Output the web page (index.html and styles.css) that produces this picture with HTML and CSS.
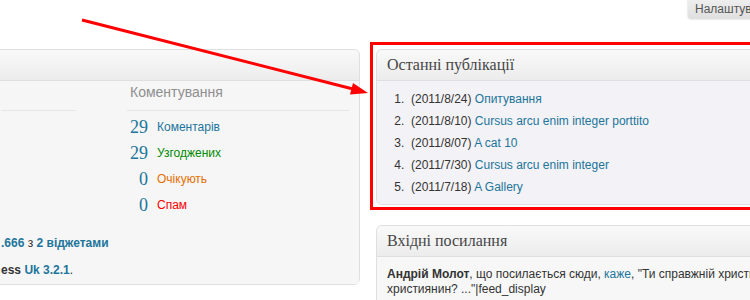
FILE: index.html
```html
<!DOCTYPE html>
<html lang="uk">
<head>
<meta charset="utf-8">
<title>Консоль</title>
<link rel="stylesheet" href="styles.css">
</head>
<body>
<div class="page">
  <div class="topbar">
    <a class="screen-btn" href="#">Налаштування екрану</a>
  </div>
  <div class="columns">
    <div class="col col-left">
      <div class="postbox">
        <div class="postbox-head"><h3 class="postbox-title"></h3></div>
        <div class="postbox-body right-now">
          <div class="rn-table">
            <div class="rn-col rn-content">
              <p class="rn-sub">&nbsp;</p>
            </div>
            <div class="rn-col rn-discussion">
              <p class="rn-sub">Коментування</p>
              <div class="rn-row"><span class="rn-num">29</span><a class="rn-label c-total" href="#">Коментарів</a></div>
              <div class="rn-row"><span class="rn-num">29</span><a class="rn-label c-approved" href="#">Узгоджених</a></div>
              <div class="rn-row"><span class="rn-num">0</span><a class="rn-label c-waiting" href="#">Очікують</a></div>
              <div class="rn-row"><span class="rn-num">0</span><a class="rn-label c-spam" href="#">Спам</a></div>
            </div>
          </div>
          <p class="rn-version"><a class="b-link" href="#">.666</a> з <a class="b-link" href="#">2 віджетами</a></p>
          <p class="rn-version"><span class="b-dark">ess</span> <a class="b-link" href="#">Uk 3.2.1</a>.</p>
        </div>
      </div>
    </div>
    <div class="col col-right">
      <div class="postbox recent">
        <div class="postbox-head"><h3 class="postbox-title">Останні публікації</h3></div>
        <div class="postbox-body">
          <ol class="recent-list">
            <li>(2011/8/24) <a href="#">Опитування</a></li>
            <li>(2011/8/10) <a href="#">Cursus arcu enim integer porttito</a></li>
            <li>(2011/8/07) <a href="#">A cat 10</a></li>
            <li>(2011/7/30) <a href="#">Cursus arcu enim integer</a></li>
            <li>(2011/7/18) <a href="#">A Gallery</a></li>
          </ol>
        </div>
      </div>
      <div class="postbox incoming">
        <div class="postbox-head"><h3 class="postbox-title">Вхідні посилання</h3></div>
        <div class="postbox-body">
          <p class="incoming-text"><strong>Андрій Молот</strong>, що посилається сюди, <a href="#">каже</a>, "Ти справжній християнин чи просто<br>християнин? ..."|feed_display</p>
        </div>
      </div>
    </div>
  </div>
  <svg class="annot" width="750" height="300" viewBox="0 0 750 300" aria-hidden="true">
    <line x1="82" y1="20" x2="353" y2="89" stroke="#ff0000" stroke-width="3"/>
    <polygon points="368,93 350,94.6 353,83" fill="#ff0000"/>
    <rect x="371.5" y="43.5" width="420" height="165" fill="none" stroke="#ff0000" stroke-width="3"/>
  </svg>
</div>
</body>
</html>
```
FILE: styles.css
```css
html, body {
  margin: 0;
  padding: 0;
  overflow: hidden;
  background: #ffffff;
}
body {
  font-family: "Liberation Sans", Arial, sans-serif;
  font-size: 12px;
  color: #333333;
}
a {
  color: #21759b;
  text-decoration: none;
}
.page {
  position: relative;
  width: 750px;
  height: 300px;
  overflow: hidden;
}
.topbar {
  display: flex;
  height: 49px;
}
.screen-btn {
  margin-left: 688px;
  height: 19px;
  padding: 0 20px 0 7px;
  line-height: 18px;
  white-space: nowrap;
  color: #555555;
  background: linear-gradient(#eeeeee, #dfdfdf);
  border-radius: 0 0 3px 3px;
  box-shadow: 0 0 2px rgba(0,0,0,0.25);
  flex-shrink: 0;
}
.columns {
  display: flex;
  gap: 16px;
  margin-left: -10px;
}
.col {
  flex-shrink: 0;
}
.col-left {
  width: 370px;
}
.col-right {
  width: 640px;
  display: flex;
  flex-direction: column;
  gap: 20px;
}
.postbox {
  border: 1px solid #dfdfdf;
  border-radius: 6px;
  background: #f7f7f7;
}
.postbox-head {
  height: 30px;
  border-bottom: 1px solid #dfdfdf;
  background: linear-gradient(#f9f9f9, #ececec);
  border-radius: 6px 6px 0 0;
  display: flex;
  align-items: center;
  padding: 0 10px;
}
.postbox-title {
  margin: 0;
  font-family: "Liberation Serif", "Times New Roman", serif;
  font-weight: normal;
  font-size: 16px;
  color: #464646;
}
.right-now {
  padding: 1px 10px 5px 10px;
  background: #f6f6f6;
}
.rn-table {
  display: grid;
  grid-template-columns: 75px 1fr;
  column-gap: 51px;
}
.rn-sub {
  margin: 0;
  padding: 0 0 8px 3px;
  line-height: 20px;
  font-size: 14px;
  color: #8f8f8f;
  border-bottom: 1px solid #e6e6e6;
}
.rn-discussion .rn-sub {
  margin-bottom: 3px;
}
.rn-row {
  display: flex;
  align-items: center;
  height: 26px;
}
.rn-num {
  width: 21px;
  text-align: right;
  font-family: "Liberation Serif", "Times New Roman", serif;
  font-size: 18px;
  color: #21759b;
}
.rn-label {
  margin-left: 9px;
}
.c-total { color: #21759b; }
.c-approved { color: #008a00; }
.c-waiting { color: #e66f00; }
.c-spam { color: #ff0000; }
.rn-version {
  margin: 0;
  line-height: 18px;
}
.rn-version:first-of-type {
  margin-top: 16px;
}
.rn-version + .rn-version {
  margin-top: 9px;
}
.b-link { font-weight: bold; }
.b-dark { font-weight: bold; color: #333333; }
.recent .postbox-body {
  background: #f3f2f6;
  padding: 7px 10px 6px 10px;
  border-radius: 0 0 6px 6px;
}
.recent-list {
  margin: 0;
  padding-left: 24px;
}
.recent-list li {
  line-height: 22px;
}
.recent-list li::marker {
  content: counter(list-item) ".\00a0\00a0";
}
.incoming .postbox-body {
  padding: 10px 10px 10px 10px;
  background: #f7f7f7;
}
.incoming-text {
  margin: 0;
  line-height: 15px;
  white-space: nowrap;
}
.annot {
  position: absolute;
  left: 0;
  top: 0;
  pointer-events: none;
}
```
